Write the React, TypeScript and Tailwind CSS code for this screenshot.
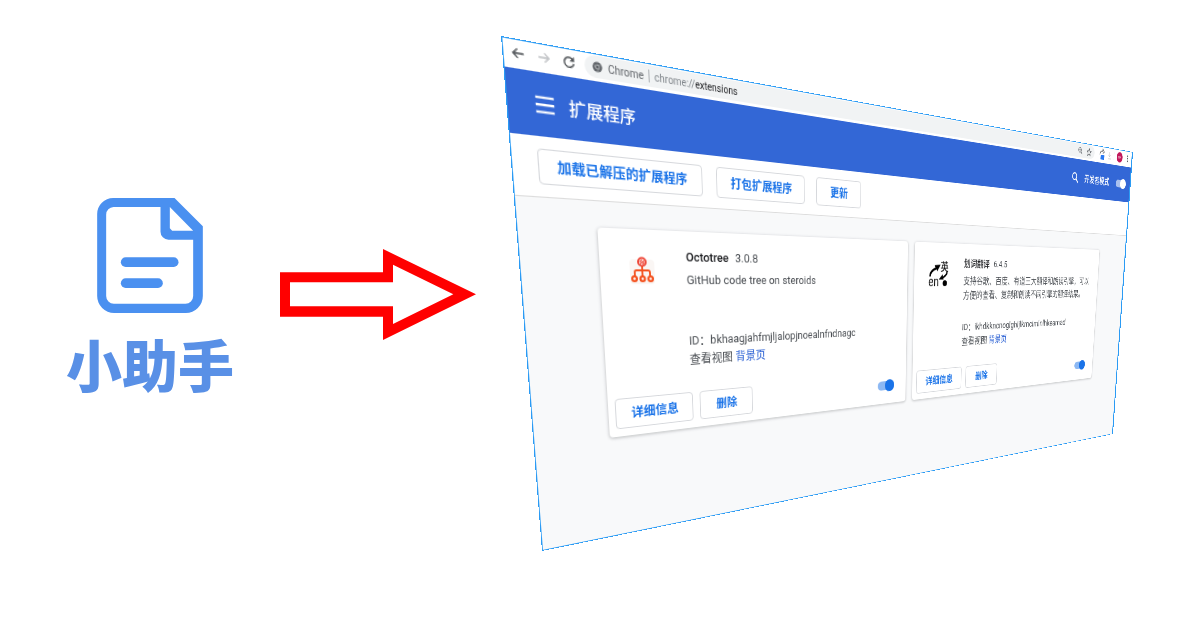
import type { ReactNode } from "react";

type Extension = {
  name: string;
  version: string;
  description: string;
  id: string;
  icon: ReactNode;
};

function DocumentLogo() {
  return (
    <svg viewBox="142 54 317 345" className="h-[115px] w-[106px]" fill="#4a90f0" aria-hidden="true">
      <path
        fillRule="evenodd"
        d="M190 54H374L459 139V348a51 51 0 0 1-51 51H193a51 51 0 0 1-51-51V102a48 48 0 0 1 48-48Z
           M191 81a23 23 0 0 0-22 23V348a23 23 0 0 0 23 23H407a23 23 0 0 0 23-23V179H356a24 24 0 0 1-24-24V81Z
           M360 81L430 152H367L360 145Z"
      />
      <rect x="213" y="232" width="173" height="29" rx="14.5" />
      <rect x="213" y="295" width="126" height="29" rx="14.5" />
    </svg>
  );
}

function Arrow() {
  return (
    <svg viewBox="30 57 588 273" className="h-[91px] w-[196px]" fill="#ff0000" aria-hidden="true">
      <path
        fillRule="evenodd"
        d="M30 127H339V57L618 193L339 330V260H30Z M60 157V229H369V282L550 193L369 104V157Z"
      />
    </svg>
  );
}

function OctotreeIcon() {
  return (
    <svg viewBox="0 0 36 36" className="size-9" fill="none" stroke="#f4511e" aria-hidden="true">
      <rect x="6" y="7" width="26" height="25" rx="4" fill="#faf6f4" stroke="none" />
      <path d="M19 14V24M11 24V20a2 2 0 0 1 2-2H25a2 2 0 0 1 2 2V24" strokeWidth="1.900" />
      <circle cx="19" cy="9.500" r="4" fill="#fff" stroke="#ee4536" strokeWidth="2" />
      <path d="M16.500 9.500L19 7.500M17 11.500L21.500 8M19.500 11.800L21.500 10" stroke="#ee4536" strokeWidth="1.200" />
      <circle cx="10.500" cy="26.500" r="2.400" strokeWidth="2.200" fill="#fff" />
      <circle cx="19" cy="26.500" r="2.400" strokeWidth="2.200" fill="#fff" />
      <circle cx="27.500" cy="26.500" r="2.400" strokeWidth="2.200" fill="#fff" />
    </svg>
  );
}

function TranslateIcon() {
  return (
    <svg viewBox="0 0 36 36" className="size-9 overflow-visible" aria-hidden="true">
      <text x="23" y="14" fontSize="15" fontWeight="500" fill="#111" className="font-['Noto_Sans_CJK_SC',sans-serif]">
        英
      </text>
      <text x="1" y="35" fontSize="18" fill="#111" className="font-['Roboto',sans-serif]">
        en
      </text>
      <path d="M4 22C4 16 9 13 15 11" fill="none" stroke="#000" strokeWidth="3" />
      <path d="M12 7L23 6L17 15Z" fill="#000" />
      <path d="M35 15C36 19 31 22 26 24" fill="none" stroke="#000" strokeWidth="2.500" />
      <path d="M27 19L29 26L20 26Z" fill="#000" />
      <circle cx="31.500" cy="31" r="4" fill="#000" />
    </svg>
  );
}

const extensions: Extension[] = [
  {
    name: "Octotree",
    version: "3.0.8",
    description: "GitHub code tree on steroids",
    id: "bkhaagjahfmjljalopjnoealnfndnagc",
    icon: <OctotreeIcon />,
  },
  {
    name: "划词翻译",
    version: "6.4.5",
    description: "支持谷歌、百度、有道三大翻译和朗读引擎，可以方便的查看、复制和朗读不同引擎的翻译结果。",
    id: "ikhdkkncnoglghljlkmcimlnlhkeamad",
    icon: <TranslateIcon />,
  },
];

function OutlineButton({ children }: { children: ReactNode }) {
  return (
    <button
      type="button"
      className="h-8 min-w-[66px] rounded border border-[#d6d8dc] bg-white px-4 text-[13px] font-bold text-[#1a73e8]"
    >
      {children}
    </button>
  );
}

function ExtensionCard({ extension }: { extension: Extension }) {
  return (
    <article className="flex h-[212px] w-[400px] flex-col rounded bg-white shadow-[0_1px_3px_1px_rgba(60,64,67,0.22)]">
      <div className="flex flex-1 gap-[31px] pt-[17px] pr-4 pl-6">
        <div className="pt-1.5">{extension.icon}</div>
        <div className="flex flex-1 flex-col text-[#4a4e53]">
          <h2 className="mb-1 flex gap-2 leading-5">
            <span className="font-medium text-[#202124]">{extension.name}</span>
            <span>{extension.version}</span>
          </h2>
          <p className="h-[65px] leading-5">{extension.description}</p>
          <p className="leading-5 whitespace-nowrap">ID：{extension.id}</p>
          <p className="leading-5">
            查看视图{" "}
            <a href="#background" className="text-[#3367d6]">
              背景页
            </a>
          </p>
        </div>
      </div>
      <div className="flex items-center gap-2 pr-5 pb-2 pl-[7px]">
        <OutlineButton>详细信息</OutlineButton>
        <OutlineButton>删除</OutlineButton>
        <input
          type="checkbox"
          defaultChecked
          aria-label={extension.name}
          className="relative ml-auto h-3 w-7 appearance-none rounded-full bg-[#8cb8f3] before:absolute before:-top-0.5 before:right-0 before:size-4 before:rounded-full before:bg-[#1a73e8]"
        />
      </div>
    </article>
  );
}

function BrowserBar() {
  return (
    <div className="flex h-[25px] items-center bg-white pb-px text-[10px] text-[#5f6368]">
      <div className="flex w-[71px] items-center gap-2.5 pl-[7px]">
        <button type="button" aria-label="后退">
          <svg viewBox="0 0 14 14" className="size-3" fill="none" stroke="#4f5357" strokeWidth="1.500">
            <path d="M12.500 7H2M6.500 2.500L2 7L6.500 11.500" />
          </svg>
        </button>
        <button type="button" aria-label="前进">
          <svg viewBox="0 0 14 14" className="size-3" fill="none" stroke="#bfc1c4" strokeWidth="1.500">
            <path d="M1.500 7H12M7.500 2.500L12 7L7.500 11.500" />
          </svg>
        </button>
        <button type="button" aria-label="重新加载">
          <svg viewBox="0 0 14 14" className="size-3" fill="none" stroke="#4f5357" strokeWidth="1.600">
            <path d="M11 4A5 5 0 1 0 12 8" />
            <path d="M12.500 1V6H7.500Z" fill="#4f5357" stroke="none" />
          </svg>
        </button>
      </div>
      <div className="flex h-5 flex-1 items-center rounded-full bg-[#f1f3f4] pr-2 pl-1.5">
        <svg viewBox="0 0 12 12" className="size-3" aria-hidden="true">
          <circle cx="6" cy="6" r="4.500" fill="#5f6368" />
          <circle cx="6" cy="6" r="1.900" fill="#5f6368" stroke="#dfe1e3" strokeWidth="0.600" />
          <path d="M6 4.100H10M4.400 7L2.500 3.800M7.600 7L5.600 10.300" stroke="#b9bcbf" strokeWidth="0.500" />
        </svg>
        <span className="ml-1">Chrome</span>
        <span className="mx-[5px] h-3 w-px bg-[#a9adb1]" />
        <span className="text-[#80868b]">
          chrome://<span className="text-[#202124]">extensions</span>
        </span>
        <svg viewBox="0 0 12 12" className="mr-2.5 ml-auto size-3" fill="none" stroke="#5f6368" aria-hidden="true">
          <circle cx="5" cy="5" r="3.500" />
          <path d="M7.500 7.500L11 11M3.500 5H6.500" strokeWidth="1.300" />
        </svg>
        <svg viewBox="0 0 12 12" className="size-3" fill="none" stroke="#5f6368" strokeWidth="1.200" aria-hidden="true">
          <path d="M6 1L7.500 4.500L11 4.800L8.300 7.200L9.100 11L6 9L2.900 11L3.700 7.200L1 4.800L4.500 4.500Z" />
        </svg>
      </div>
      <div className="flex w-[103px] items-center pl-3">
        <svg viewBox="0 0 14 18" className="h-[18px] w-3.5" aria-hidden="true">
          <path d="M2 10C2 5 5 4 9 4V1L13 5L9 8" fill="none" stroke="#5f6368" strokeWidth="1.500" />
          <rect x="4" y="10" width="10" height="7" rx="1" fill="#2979f2" />
        </svg>
        <svg viewBox="0 0 10 12" className="ml-2 h-3 w-2.5" fill="none" stroke="#c4c7ca" aria-hidden="true">
          <path d="M5 1V8M2 5L5 8L8 5M1 11H9" />
        </svg>
        <span className="mx-[7px] h-3 w-px bg-[#dadce0]" />
        <span className="flex size-4 items-center justify-center rounded-full bg-[#c2185b] text-[8px] text-[#f0b8cd]">
          ux
        </span>
        <svg viewBox="0 0 4 12" className="ml-3 h-3 w-1" fill="#5f6368" aria-hidden="true">
          <circle cx="2" cy="2" r="1.300" />
          <circle cx="2" cy="6" r="1.300" />
          <circle cx="2" cy="10" r="1.300" />
        </svg>
      </div>
    </div>
  );
}

function BrowserWindow() {
  return (
    <section className="h-[480px] w-[960px] origin-top-left overflow-hidden bg-[#f8f9fa] text-[13px] after:pointer-events-none after:absolute after:inset-0 after:border after:border-r-[3px] after:border-[#2b9bf4] [transform:matrix3d(1.239906,0.2275777,0,0.00092021,0.0971847,1.220735,0,0.00028703,0,0,1,0,0,0,0,1)] font-['Roboto','Noto_Sans_CJK_SC',sans-serif]">
      <BrowserBar />
      <header className="flex h-14 items-center bg-[#3367d6] pr-3.5 pl-6 text-white">
        <button type="button" aria-label="菜单">
          <svg viewBox="0 0 20 20" className="size-[18px]" fill="currentColor">
            <path d="M1 2H19V4.300H1ZM1 9H19V11.300H1ZM1 16H19V18.300H1Z" />
          </svg>
        </button>
        <h1 className="ml-3 flex-1 pt-0.5 text-base font-medium">扩展程序</h1>
        <button type="button" aria-label="搜索" className="mr-3.5">
          <svg viewBox="0 0 18 18" className="size-[18px]" fill="none" stroke="currentColor" strokeWidth="2">
            <circle cx="7.500" cy="7" r="5" />
            <path d="M11 10.500L16 16" />
          </svg>
        </button>
        <label className="flex items-center gap-[18px] font-medium">
          开发者模式
          <input
            type="checkbox"
            defaultChecked
            className="relative h-3 w-7 appearance-none rounded-full bg-[#a9c0ee] before:absolute before:-top-0.5 before:right-0 before:size-4 before:rounded-full before:bg-white"
          />
        </label>
      </header>
      <div className="flex h-[55px] items-center gap-4 border-b border-[#dcdcdc] bg-white px-[23px]">
        <OutlineButton>加载已解压的扩展程序</OutlineButton>
        <OutlineButton>打包扩展程序</OutlineButton>
        <OutlineButton>更新</OutlineButton>
      </div>
      <div className="flex justify-center gap-3 pt-[25px]">
        {extensions.map((extension) => (
          <ExtensionCard key={extension.id} extension={extension} />
        ))}
      </div>
    </section>
  );
}

export default function App() {
  return (
    <main className="flex min-h-screen items-start overflow-hidden bg-white">
      <div className="flex w-[236px] shrink-0 flex-col items-center pt-[198px] pl-16">
        <DocumentLogo />
        <p className="mt-5 text-[56px] leading-[60px] font-black text-[#5990e6] font-['Noto_Sans_CJK_SC',sans-serif]">
          小助手
        </p>
      </div>
      <div className="shrink-0 pt-[249px] pl-11">
        <Arrow />
      </div>
      <div className="shrink-0 pt-9 pl-[25px]">
        <div className="h-[515px] w-[632px]">
          <BrowserWindow />
        </div>
      </div>
    </main>
  );
}
